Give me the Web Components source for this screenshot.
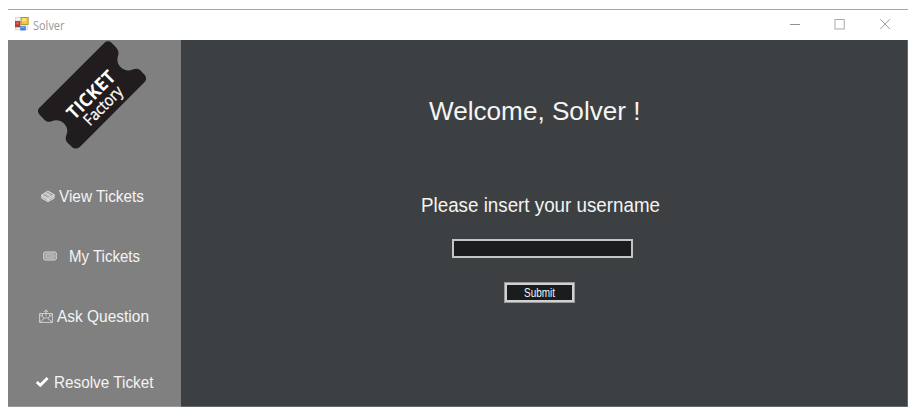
<!DOCTYPE html>
<html lang="en">
<head>
<meta charset="utf-8">
<title>Solver</title>
<style>
html,body{margin:0;background:#fff}
body{width:914px;height:415px;overflow:hidden;font-family:"Liberation Sans",Arial,sans-serif;color:#f4f4f4}
</style>
</head>
<body>
<solver-app></solver-app>
<script>
const define = (name, html, setup) => customElements.define(name, class extends HTMLElement {
  connectedCallback() {
    if (this.shadowRoot) return;
    const root = this.attachShadow({mode: "open"});
    const t = document.createElement("template");
    t.innerHTML = html;
    root.append(t.content.cloneNode(true));
    if (setup) setup(this, root);
  }
});

/* One line of text condensed or stretched to a given width. */
define("fit-text", `<style>
:host{display:block;flex:none}
svg{display:block;overflow:visible}
text{fill:currentColor}
</style><svg><text y="0"></text></svg>`, (el, root) => {
  const size = +el.getAttribute("size"), width = el.getAttribute("width");
  const svg = root.querySelector("svg"), text = root.querySelector("text");
  svg.setAttribute("width", width);
  svg.setAttribute("height", size);
  text.setAttribute("y", size * 0.86);
  text.setAttribute("font-size", size);
  text.setAttribute("textLength", width);
  text.setAttribute("lengthAdjust", "spacingAndGlyphs");
  text.textContent = el.getAttribute("text");
});

define("app-icon", `<style>:host{display:block;width:14px;height:14px}svg{display:block}</style>
<svg width="14" height="14" viewBox="0 0 14 14">
<rect x=".4" y=".4" width="12" height="12.4" fill="#f3f3f3" stroke="#cfcfcf" stroke-width=".7"/>
<rect x=".4" y="4.3" width="4.6" height="5.6" fill="#bf3b2c" stroke="#8d3a35" stroke-width=".7"/>
<rect x="1.5" y="5.3" width="2" height="2" fill="#dc7868"/>
<rect x="6" y=".4" width="7.2" height="7" fill="#f3ca35" stroke="#a98428" stroke-width=".8"/>
<rect x="7.2" y="1.5" width="4" height="2.6" fill="#fbe58b"/>
<rect x="5.6" y="9.2" width="5" height="3.9" fill="#3f83e6" stroke="#5386cc" stroke-width=".6"/>
<rect x="6.5" y="9.8" width="3" height="1.2" fill="#79b1f5"/>
</svg>`);

define("window-controls", `<style>:host{display:block}svg{display:block}</style>
<svg width="102" height="12" viewBox="0 0 102 12" fill="none" stroke="#9c9c9c">
<path d="M0 5.5H10" stroke="#929292"/><rect x="45" y=".5" width="9.2" height="9.5" stroke="#a9a9a9"/>
<path d="M90.3 .2l9.6 9.8M99.9 .2l-9.6 9.8"/></svg>`);

define("title-bar", `<style>
:host{display:flex;align-items:center;height:30px;box-sizing:border-box;border-top:1px solid #a6a6a6;padding:0 16px 0 7px;background:#fff;color:#999;font-family:"Open Sans","Noto Sans",sans-serif}
app-icon{margin-top:-2px}
fit-text{margin:0 0 0 4px}
window-controls{margin-left:auto}
</style><app-icon></app-icon><fit-text text="Solver" size="12.2" width="31.5"></fit-text><window-controls></window-controls>`);

define("brand-ticket", `<style>:host{display:block;height:112px}svg{display:block}</style>
<svg width="173" height="112" viewBox="8 40 173 112">
<path fill="#211d1e" d="M104.5 42.8Q108 40 111.3 42.6L116.4 47.7Q118.8 50.2 118.5 54.2C116.8 58.8 117 63.3 120.3 66.7C124 70.6 128.8 71.2 132.6 69.5Q137.5 67.8 140.3 70.3L145 75.2Q147.4 78.8 144.7 81.9L79.8 147Q76 149.6 72.8 147.8L67.3 142.5Q65 139.7 65.8 136.4C68.2 131.8 67.8 127.2 64 123.5C60.4 119.8 55.8 119.4 51.6 121.2Q47.8 122.8 44.8 120.2L39.2 114.2Q36.6 110.8 39.4 107.7Z"/>
<g transform="translate(74.3 120.6) rotate(-45)" fill="#fff" font-family="Open Sans,Noto Sans,sans-serif">
<text font-size="18.5" font-weight="700" textLength="60" lengthAdjust="spacingAndGlyphs">TICKET</text>
<text x="7" y="15.3" font-size="16" textLength="48" lengthAdjust="spacingAndGlyphs" stroke="#fff" stroke-width=".3">Factory</text></g></svg>`);

const icons = {
tickets: `<g stroke="#e0e0e0" stroke-width=".9" fill="#aaa"><path d="M.7 6L6.9 2L13.3 5.7L13 9.3L6.9 12.7L.7 9.2Z"/><path fill="none" d="M.7 6L7 9.3L13.3 5.7M7 9.3V12.5M3.8 4.3L9.7 7.5M5.8 4.6L8.7 5.8M1.2 7.5L7 10.8L13 7.3"/></g>`,
mine: `<g fill="none" stroke="#d6d6d6"><path fill="#999" d="M2 3H12Q13.5 3.2 13.5 5Q12.6 7 13.5 9Q13.2 10.8 12 11H2Q.5 10.6.5 9Q1.4 7 .5 5Q.7 3.2 2 3Z"/><rect x="3.1" y="5" width="7.8" height="4" rx=".6" stroke-width=".8"/><path d="M4.5 7H6.2M7.2 7H9.3"/></g>`,
ask: `<g fill="none" stroke="#d8d8d8" stroke-width=".9"><path d="M3.3 4.5H.6V13.4H13.4V4.5H10.7M.6 5.5L5 9M13.4 5.5L9 9M.8 13.2L5.4 9.2Q7 8.2 8.6 9.2L13.2 13.2M3.3 7.4V4.5H10.7V7.4M7 6.8V1.2M5 3L7 .9L9 3"/></g>`,
check: `<path d="M1.8 7L5.3 10.2L12.6 2.9" fill="none" stroke="#fff" stroke-width="2.8"/>`
};

define("nav-item", `<style>
:host{display:flex;align-items:center;height:20px}
svg{display:block;flex:none;margin-right:var(--gap,4px)}
</style><svg width="14" height="14" viewBox="0 0 14 14"></svg><slot></slot>`, (el, root) => {
  root.querySelector("svg").innerHTML = icons[el.getAttribute("icon")];
});

define("side-bar", `<style>
:host{display:flex;flex-direction:column;width:173px;height:367px;background:#808080;box-sizing:border-box;border-bottom:1px solid #999;flex:none}
nav{display:flex;flex-direction:column}
nav-item:nth-child(1){margin:34px 0 0 33px}
nav-item:nth-child(2){margin:40px 0 0 35px;--gap:11.5px}
nav-item:nth-child(3){margin:40px 0 0 31px}
nav-item:nth-child(4){margin:46px 0 0 27px;--gap:4.5px}
</style><brand-ticket></brand-ticket><nav>
<nav-item icon="tickets"><fit-text text="View Tickets" size="16.5" width="85"></fit-text></nav-item>
<nav-item icon="mine"><fit-text text="My Tickets" size="16.5" width="71"></fit-text></nav-item>
<nav-item icon="ask"><fit-text text="Ask Question" size="16.5" width="92"></fit-text></nav-item>
<nav-item icon="check"><fit-text text="Resolve Ticket" size="16.5" width="99.5"></fit-text></nav-item>
</nav>`);

define("text-field", `<style>
:host{display:block;width:181px;height:19px}
input{display:block;box-sizing:border-box;width:100%;height:100%;border:2px solid #c3c4c4;border-radius:0;background:#1a1c1d;color:#fff;padding:0 3px;margin:0;outline:0;font:12px "Liberation Sans",sans-serif}
</style><input aria-label="Username">`);

define("submit-button", `<style>
:host{display:block;width:71px;height:21px}
button{display:flex;align-items:center;justify-content:center;box-sizing:border-box;width:100%;height:100%;padding:0;margin:0;border:3px solid #d0d1d1;outline:1px solid #98999a;outline-offset:-1px;background:#1a1c1d;color:#f4f4f4;font-family:"Liberation Sans",sans-serif}
</style><button><fit-text text="Submit" size="12.5" width="31"></fit-text></button>`);

define("login-panel", `<style>
:host{display:flex;flex-direction:column;align-items:flex-start;flex:1;height:367px;box-sizing:border-box;background:#3c4042;border-right:1px solid #65696b;border-bottom:1px solid #65696b}
fit-text:nth-of-type(1){margin:58px 0 0 247.5px}
fit-text:nth-of-type(2){margin:70px 0 0 239.5px}
text-field{margin:24px 0 0 271px}
submit-button{margin:24px 0 0 323px}
</style><fit-text text="Welcome, Solver !" size="26" width="211.5"></fit-text>
<fit-text text="Please insert your username" size="20.5" width="239"></fit-text>
<text-field></text-field><submit-button></submit-button>`);

define("solver-app", `<style>
:host{display:block;box-sizing:border-box;width:908px;padding:10px 0 0 8px}
main{display:flex}
title-bar{margin-top:-1px;height:31px}
</style><title-bar></title-bar><main><side-bar></side-bar><login-panel></login-panel></main>`);
</script>
</body>
</html>
